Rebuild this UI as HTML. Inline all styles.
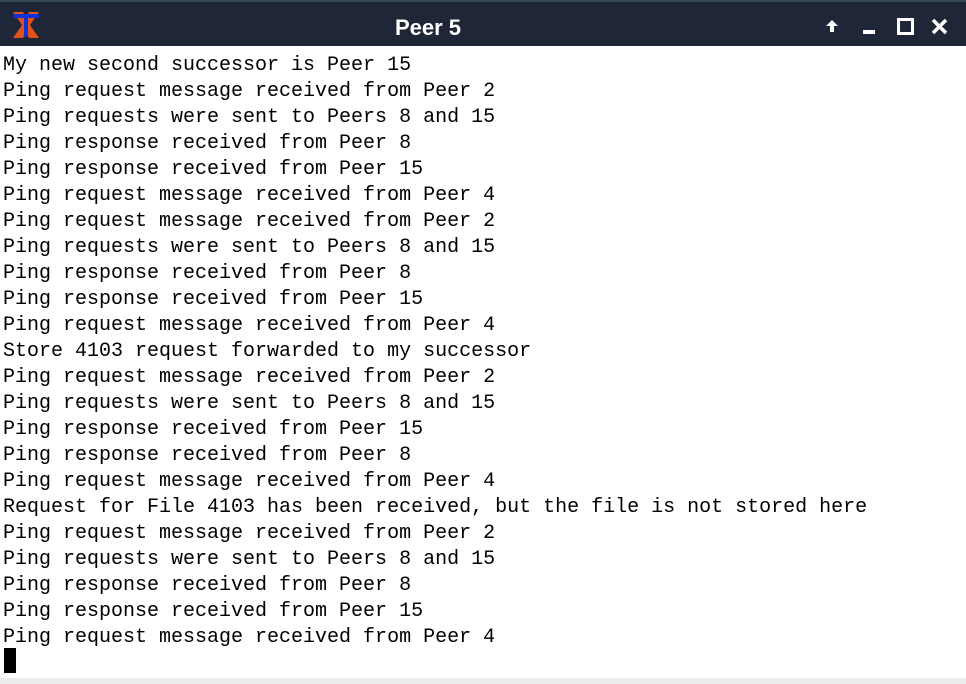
<!DOCTYPE html>
<html><head><style>
html,body{margin:0;padding:0;width:966px;height:684px;overflow:hidden;background:#fff}
#tb{position:absolute;left:0;top:0;width:966px;height:46px;background:#1f2637;border-top:2px solid #3a4a55;box-sizing:border-box}
#title{position:absolute;left:0;width:856px;top:13px;text-align:center;color:#fff;font:bold 22px "Liberation Sans",sans-serif}
#term{position:absolute;left:3px;top:53px;font:20px/26px "Liberation Mono",monospace;color:#000;white-space:pre}
#cur{position:absolute;left:4px;top:648px;width:12px;height:25px;background:#000}
#bot{position:absolute;left:0;top:678px;width:966px;height:6px;background:#ececec}
</style></head><body>
<div id="tb">
<svg style="position:absolute;left:10px;top:8px" width="32" height="30" viewBox="0 0 32 30">
<path d="M3 2 L13 2 L16 8 L19 2 L29 2 L20 15 L29 28 L19 28 L16 22 L13 28 L3 28 L12 15 Z" fill="#e0541c"/>
<path d="M3 4 H29 V8 H18 V27 H14 V8 H3 Z" fill="#1030d8"/>
</svg>
<div id="title">Peer 5</div>
<svg style="position:absolute;left:822px;top:16px" width="140" height="22" viewBox="0 0 140 22">
<path d="M10 2 L16 8 H12 V14 H8 V8 H4 Z" fill="#fff"/>
<rect x="41" y="12" width="12" height="4" fill="#fff"/>
<rect x="76.5" y="1.5" width="14" height="14" fill="none" stroke="#fff" stroke-width="3"/>
<path d="M111 2 L124 15 M124 2 L111 15" stroke="#fff" stroke-width="3.5"/>
</svg>
</div>
<div id="term">My new second successor is Peer 15
Ping request message received from Peer 2
Ping requests were sent to Peers 8 and 15
Ping response received from Peer 8
Ping response received from Peer 15
Ping request message received from Peer 4
Ping request message received from Peer 2
Ping requests were sent to Peers 8 and 15
Ping response received from Peer 8
Ping response received from Peer 15
Ping request message received from Peer 4
Store 4103 request forwarded to my successor
Ping request message received from Peer 2
Ping requests were sent to Peers 8 and 15
Ping response received from Peer 15
Ping response received from Peer 8
Ping request message received from Peer 4
Request for File 4103 has been received, but the file is not stored here
Ping request message received from Peer 2
Ping requests were sent to Peers 8 and 15
Ping response received from Peer 8
Ping response received from Peer 15
Ping request message received from Peer 4</div>
<div id="cur"></div>
<div id="bot"></div>
</body></html>
